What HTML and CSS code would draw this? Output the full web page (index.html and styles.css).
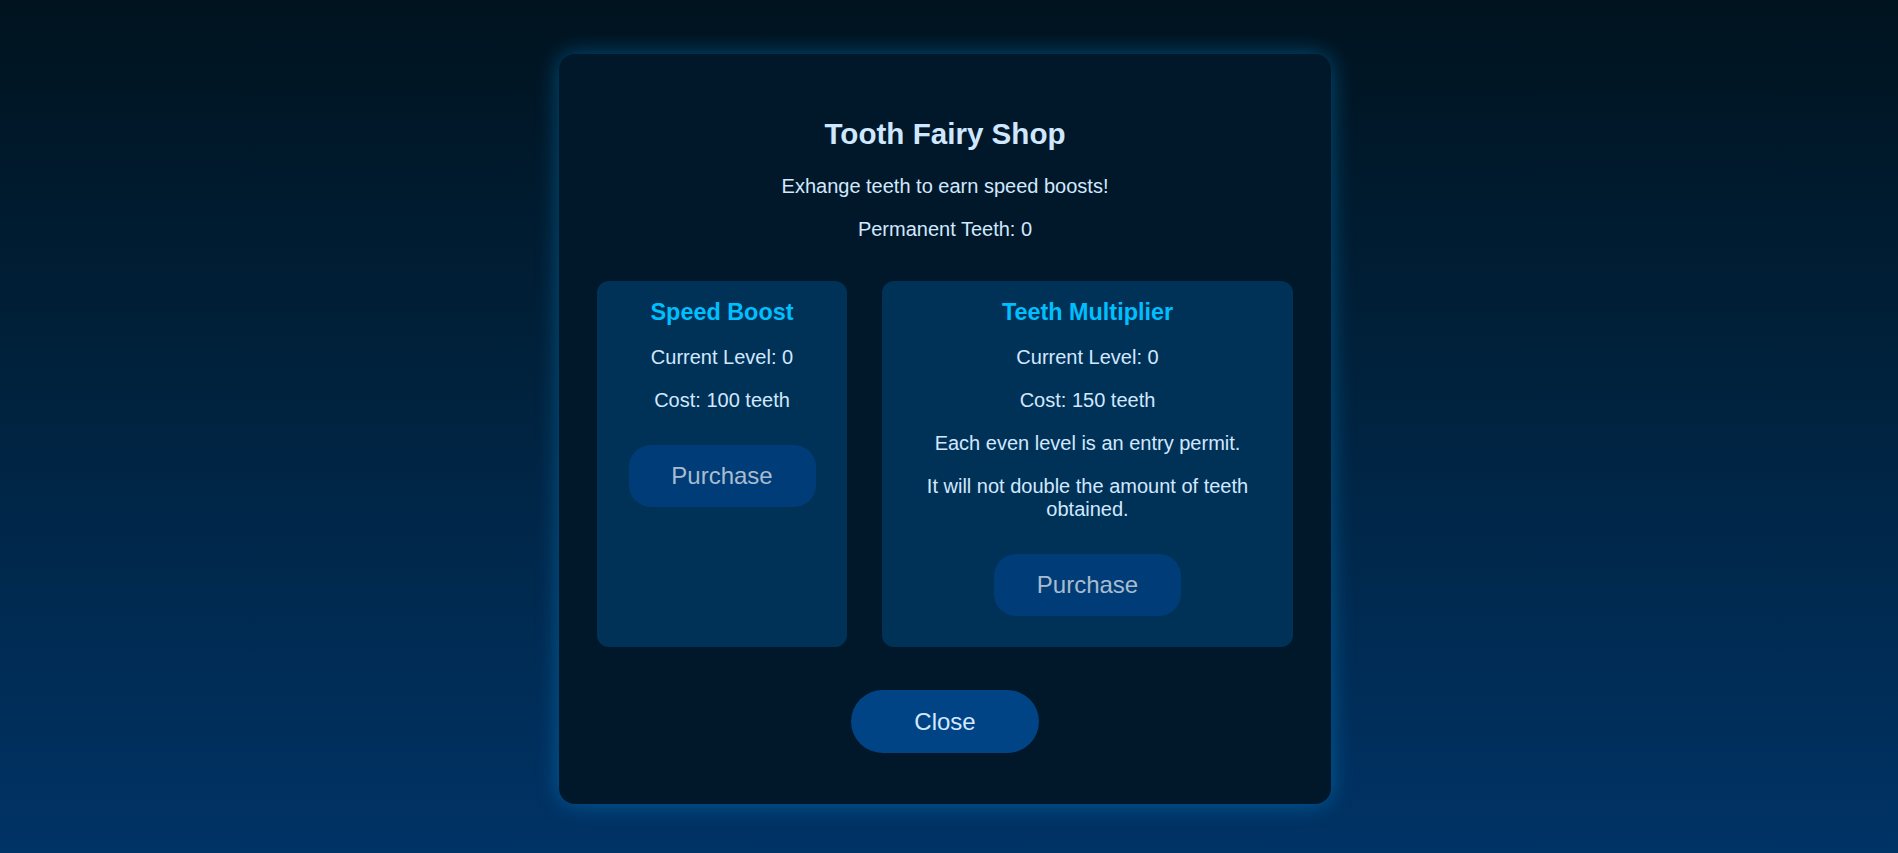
FILE: index.html
```html
<!DOCTYPE html>
<html lang="en">
<head>
<meta charset="utf-8">
<title>Tooth Fairy Shop</title>
<link rel="stylesheet" href="styles.css">
</head>
<body>
  <div class="overlay">
    <div class="shop-modal">
      <h2 class="shop-title">Tooth Fairy Shop</h2>
      <p class="shop-text">Exhange teeth to earn speed boosts!</p>
      <p class="shop-text">Permanent Teeth: 0</p>
      <div class="shop-items">
        <div class="shop-item item-speed">
          <h3 class="item-title">Speed Boost</h3>
          <p class="shop-text">Current Level: 0</p>
          <p class="shop-text">Cost: 100 teeth</p>
          <button class="btn btn-purchase">Purchase</button>
        </div>
        <div class="shop-item item-multiplier">
          <h3 class="item-title">Teeth Multiplier</h3>
          <p class="shop-text">Current Level: 0</p>
          <p class="shop-text">Cost: 150 teeth</p>
          <p class="shop-text">Each even level is an entry permit.</p>
          <p class="shop-text">It will not double the amount of teeth obtained.</p>
          <button class="btn btn-purchase">Purchase</button>
        </div>
      </div>
      <div class="shop-footer">
        <button class="btn btn-close">Close</button>
      </div>
    </div>
  </div>
</body>
</html>
```
FILE: styles.css
```css
html, body {
  margin: 0;
  padding: 0;
  height: 100%;
}

body {
  background: linear-gradient(to bottom, #00131f 0%, #00223d 45%, #003366 100%);
  font-family: "Liberation Sans", Arial, Helvetica, sans-serif;
  color: #d2e8ff;
  overflow: hidden;
}

.overlay {
  height: 100%;
  display: flex;
  justify-content: center;
  align-items: flex-start;
  padding-top: 54px;
  padding-right: 8px;
  box-sizing: border-box;
}

.shop-modal {
  width: 772px;
  box-sizing: border-box;
  background: #001829;
  border-radius: 16px;
  padding: 38.5px 38px 50.5px;
  box-shadow: 0 0 22px rgba(0, 150, 230, 0.45);
  text-align: center;
}

.shop-title {
  font-size: 29.6px;
  font-weight: bold;
  color: #cfe8ff;
  margin: 24px 0 24.5px;
}

.shop-text {
  font-size: 20px;
  margin: 20px 0;
  color: #d2e8ff;
}

.shop-items {
  display: flex;
  gap: 35px;
  margin-top: 40px;
  align-items: stretch;
}

.shop-item {
  background: #003258;
  border-radius: 12px;
  padding: 18px 20px 31px;
}

.item-speed {
  flex: 0 0 250px;
  box-sizing: border-box;
}

.item-multiplier {
  flex: 1 1 auto;
  min-width: 0;
}

.item-title {
  font-size: 23.4px;
  font-weight: bold;
  color: #00bfff;
  margin: 0 0 20px;
}

.btn {
  display: block;
  width: 187px;
  height: 62px;
  margin: 33px auto 0;
  border: none;
  border-radius: 22px;
  font-family: "Liberation Sans", Arial, Helvetica, sans-serif;
  font-size: 24px;
  cursor: pointer;
}

.btn-purchase {
  background: #003d78;
  color: #a9bccf;
}

.shop-footer {
  margin-top: 43px;
}

.btn-close {
  width: 188px;
  height: 63px;
  margin: 0 auto;
  border-radius: 32px;
  background: #004485;
  color: #d2e8ff;
}
```
